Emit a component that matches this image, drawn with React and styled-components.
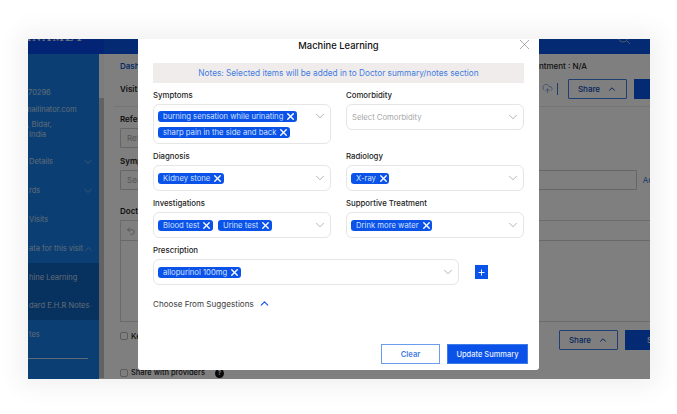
import React from "react";
import styled, { createGlobalStyle } from "styled-components";
import { ChevronDown, ChevronUp, X, Plus, Undo2, CloudUpload } from "lucide-react";

const Global = createGlobalStyle`
  html, body { margin: 0; background: #fff; }
  body { width: 677px; height: 414px; overflow: hidden; font-family: Inter, "Open Sans", sans-serif; }
  * { box-sizing: border-box; }
`;

const Frame = styled.div`
  position: relative;
  width: 622px;
  height: 340px;
  margin: 39px 0 0 28px;
  box-shadow: 0 0 24px 8px rgba(0, 0, 0, 0.06);
`;
const Page = styled.div`
  width: 100%;
  height: 100%;
  overflow: hidden;
  display: flex;
  flex-direction: column;
  background: #fff;
`;
const Header = styled.header`
  flex: none;
  height: 15px;
  display: flex;
  justify-content: space-between;
  background: #0654e4;
  overflow: hidden;
`;
const LogoCell = styled.div`
  width: 76px;
  background: #0648e8;
  overflow: hidden;
`;
const Logo = styled.div`
  width: 57px;
  margin-top: -9px;
  color: #fff;
  font: 700 12px/14px "Liberation Serif", serif;
  letter-spacing: 1.5px;
  white-space: nowrap;
  direction: rtl;
  opacity: 0.9;
`;
const Search = styled.div`
  width: 33px;
  margin-top: -10px;
  color: #9fb4dd;
`;
const Body = styled.div`
  flex: 1;
  min-height: 0;
  display: flex;
`;
const Sidebar = styled.aside`
  flex: none;
  width: 71px;
  overflow: hidden;
  display: flex;
  flex-direction: column;
  background: #167ee6;
  color: #c0d6ee;
  font-size: 7.5px;
  padding-top: 34px;
`;
const Contact = styled.div`
  white-space: nowrap;
  line-height: 10px;
  margin-bottom: ${(p) => p.$gap || 0}px;
  margin-left: ${(p) => p.$left || 0}px;
`;
const Nav = styled.div`
  flex: none;
  width: 71px;
  height: ${(p) => (p.$active ? 28.5 : 29)}px;
  display: flex;
  align-items: center;
  justify-content: space-between;
  padding: 0 5px 0 1px;
  white-space: nowrap;
  background: ${(p) => (p.$active ? "#0f62bc" : "transparent")};
  overflow: hidden;
`;
const SideRule = styled.div`
  flex: none;
  width: 60px;
  height: 1px;
  margin-top: 9px;
  background: #c0d4ea;
`;
const Track = styled.div`
  flex: none;
  width: 5px;
  padding-top: 44px;
  background: #f8f8f8;
`;
const Thumb = styled.div`
  height: 280px;
  background: #c4c4c4;
`;
const Main = styled.main`
  flex: 1;
  min-width: 0;
  padding: 6px 0 0 16px;
  overflow: hidden;
  font-size: 8px;
  color: #222;
`;
const Crumb = styled.div`
  color: #0f57c8;
  font-weight: 600;
  line-height: 12px;
  margin-bottom: 5px;
  display: flex;
  justify-content: space-between;
`;
const Appointment = styled.span`
  color: #222;
  font-weight: 500;
  margin-right: 63px;
`;
const VisitBar = styled.div`
  display: flex;
  align-items: center;
  justify-content: space-between;
  height: 23px;
  font-weight: 600;
`;
const Tools = styled.div`
  display: flex;
  align-items: center;
  color: #2f6fd0;
`;
const Divider = styled.span`
  width: 1px;
  height: 12px;
  margin: 0 10px 0 4px;
  background: #3a76d6;
`;
const Rule = styled.div`
  height: 1px;
  margin: 6px 0 6px -6px;
  background: #e8e8e8;
`;
const OutlineBtn = styled.div`
  width: 59px;
  height: 20px;
  display: flex;
  align-items: center;
  justify-content: center;
  gap: 7px;
  border: 1px solid #3f7fe8;
  border-radius: 1px;
  color: #0a4ab8;
  font-weight: 500;
`;
const FillBtn = styled.div`
  width: 60px;
  height: 20px;
  margin-left: 7px;
  background: #0654e4;
  color: #fff;
  display: flex;
  align-items: center;
  padding-left: 22px;
  margin-right: -44px;
`;
const FieldLabel = styled.div`
  font-weight: 600;
  line-height: 12px;
  margin-bottom: 3px;
`;
const InputRow = styled.div`
  display: flex;
  align-items: center;
  gap: 6px;
  width: ${(p) => (p.$short ? "300px" : "auto")};
  margin-right: ${(p) => (p.$short ? 0 : -8)}px;
  margin-bottom: ${(p) => p.$mb}px;
  color: #2f6fd0;
`;
const FakeInput = styled.div`
  flex: 1;
  height: 20px;
  border: 1px solid #ccc;
  border-radius: 1px;
  padding-left: 6px;
  display: flex;
  align-items: center;
  color: #aaa;
`;
const Editor = styled.div`
  height: 102px;
  margin-right: -2px;
  border: 1px solid #d6d6d6;
`;
const EditorBar = styled.div`
  height: 20px;
  display: flex;
  align-items: center;
  padding-left: 5px;
  border-bottom: 1px solid #d2d2d2;
  color: #777;
`;
const Check = styled.span`
  width: 8px;
  height: 8px;
  border: 1px solid #bbb;
  border-radius: 2px;
  flex: none;
`;
const KeepRow = styled.div`
  display: flex;
  align-items: flex-start;
  justify-content: space-between;
  margin-top: 8px;
  height: 20px;
  font-weight: 500;
`;
const CheckText = styled.div`
  display: flex;
  align-items: center;
  gap: 3px;
  font-weight: 500;
  line-height: 10px;
`;
const KeepActions = styled.div`
  display: flex;
  margin-right: 9px;
`;
const KeepText = styled(CheckText)`
  margin-top: 1px;
`;
const ShareRow = styled(CheckText)`
  margin-top: 18px;
  height: 10px;
  font-size: 7.5px;
`;
const Help = styled.span`
  width: 9px;
  height: 9px;
  margin-left: 7px;
  border-radius: 50%;
  background: #111;
  color: #fff;
  font-size: 6px;
  font-weight: 700;
  display: flex;
  align-items: center;
  justify-content: center;
`;
const Scrim = styled.div`
  position: absolute;
  inset: 0;
  background: rgba(0, 0, 0, 0.5);
`;
const Modal = styled.section`
  position: absolute;
  left: 110px;
  top: 0;
  width: 401px;
  height: 331px;
  padding: 0 15px;
  display: flex;
  flex-direction: column;
  background: #fff;
  border-radius: 0 0 3px 3px;
  color: #222;
`;
const CloseBtn = styled.div`
  position: absolute;
  top: -3px;
  right: 6px;
  color: #8a8a8a;
  display: flex;
`;
const Title = styled.h2`
  margin: 0;
  height: 24px;
  padding-top: 1px;
  text-align: center;
  font-size: 9.4px;
  line-height: 12px;
  font-weight: 500;
  color: #111;
`;
const Note = styled.div`
  height: 20px;
  display: flex;
  align-items: center;
  justify-content: center;
  background: #f1ecec;
  color: #3f7ce0;
  font-size: 8.25px;
`;
const FormGrid = styled.div`
  display: grid;
  grid-template-columns: 178px 178px;
  column-gap: 15px;
  margin-top: 6px;
`;
const Field = styled.div`
  display: flex;
  flex-direction: column;
  grid-column: ${(p) => (p.$wide ? "1 / 3" : "auto")};
  margin-bottom: 6px;
`;
const Label = styled.label`
  height: 12px;
  margin-bottom: 3px;
  font-size: 7.8px;
  line-height: 12px;
  font-weight: 500;
  color: #222;
`;
const SelectRow = styled.div`
  display: flex;
  align-items: center;
  gap: 16px;
`;
const Select = styled.div`
  width: ${(p) => p.$w || 178}px;
  height: ${(p) => (p.$tall ? 40 : 26)}px;
  padding: ${(p) => (p.$tall ? "6px 24px 0 4px" : "0 24px 0 4px")};
  position: relative;
  display: flex;
  flex-wrap: wrap;
  align-items: ${(p) => (p.$tall ? "flex-start" : "center")};
  align-content: ${(p) => (p.$tall ? "flex-start" : "center")};
  gap: 5px;
  border: 1px solid #e6e6e6;
  border-radius: 6px;
  background: #fff;
`;
const Caret = styled.span`
  position: absolute;
  right: 3px;
  top: ${(p) => p.$top}px;
  display: flex;
  color: #8a8a8a;
`;
const Placeholder = styled.span`
  font-size: 7.7px;
  padding-left: 1px;
  color: #a8a8a8;
`;
const Chip = styled.span`
  height: 11px;
  display: inline-flex;
  align-items: center;
  gap: 2px;
  padding: 0 0 0 5px;
  border-radius: 3px;
  background: #0a52e8;
  color: #cfe0ff;
  font-size: 7.7px;
  white-space: nowrap;
`;
const ChipX = styled(X)`
  color: #fff;
  margin-right: 0.5px;
`;
const AddBtn = styled.div`
  width: 13px;
  height: 14px;
  display: flex;
  align-items: center;
  justify-content: center;
  background: #0a52e8;
  color: #fff;
`;
const Suggestions = styled.div`
  display: flex;
  align-items: center;
  gap: 4px;
  margin-top: 6px;
  font-size: 8.1px;
  color: #3c3c3c;
  line-height: 12px;
  svg { color: #0a52e8; }
`;
const Footer = styled.div`
  margin-top: auto;
  margin-right: -4px;
  margin-bottom: 6px;
  display: flex;
  justify-content: flex-end;
  gap: 7px;
`;
const ClearBtn = styled.button`
  width: 59px;
  height: 20px;
  padding: 0;
  border: 1px solid #6a9cf0;
  background: #fff;
  color: #3f7ce0;
  font: 600 7.6px Inter, sans-serif;
`;
const UpdateBtn = styled.button`
  width: 81px;
  height: 20px;
  padding: 0;
  border: 1px solid #3f7ce8;
  background: #0a52e8;
  color: #e4edff;
  font: 500 7.5px Inter, sans-serif;
`;

const chip = (t) => (
  <Chip key={t}>
    {t}
    <ChipX size={11} strokeWidth={3} />
  </Chip>
);

const SelectField = ({ items = [], placeholder, tall, w }) => (
  <Select $tall={tall} $w={w}>
    {items.map(chip)}
    {placeholder && <Placeholder>{placeholder}</Placeholder>}
    <Caret $top={tall ? 4 : 5}>
      <ChevronDown size={14} strokeWidth={1.1} />
    </Caret>
  </Select>
);

export default function App() {
  return (
    <>
      <Global />
      <Frame>
        <Page>
          <Header>
            <LogoCell><Logo>SANAMEY</Logo></LogoCell>
            <Search>
              <svg width="14" height="14" viewBox="0 0 14 14" fill="none" stroke="currentColor">
                <circle cx="6" cy="6" r="5" />
                <path d="M10 10l3 3" />
              </svg>
            </Search>
          </Header>
          <Body>
            <Sidebar>
              <Contact $gap={7}>70296</Contact>
              <Contact $gap={5} $left={-3}>mailinator.com</Contact>
              <Contact $left={-3}>r, Bidar,</Contact>
              <Contact $gap={7} $left={1}>India</Contact>
              <Nav><span>Details</span><ChevronDown size={12} strokeWidth={1.1} /></Nav>
              <Nav><span>rds</span><ChevronDown size={12} strokeWidth={1.1} /></Nav>
              <Nav><span>Visits</span></Nav>
              <Nav><span>ata for this visit</span><ChevronUp size={12} strokeWidth={1.1} /></Nav>
              <Nav $active><span>hine Learning</span></Nav>
              <Nav $active><span>dard E.H.R Notes</span><ChevronDown size={12} strokeWidth={1.1} /></Nav>
              <Nav><span>tes</span></Nav>
              <SideRule />
            </Sidebar>
            <Track><Thumb /></Track>
            <Main>
              <Crumb>
                <span>Dashboard</span>
                <Appointment>Appointment : N/A</Appointment>
              </Crumb>
              <VisitBar>
                <span>Visit</span>
                <Tools>
                  <CloudUpload size={11} strokeWidth={1.2} />
                  <Divider />
                  <OutlineBtn>Share<ChevronUp size={10} strokeWidth={2.4} /></OutlineBtn>
                  <FillBtn />
                </Tools>
              </VisitBar>
              <Rule />
              <FieldLabel>Referred</FieldLabel>
              <InputRow $short $mb={7}><FakeInput>Refer</FakeInput></InputRow>
              <FieldLabel>Symptoms</FieldLabel>
              <InputRow $mb={15}><FakeInput>Search</FakeInput>Add</InputRow>
              <FieldLabel>Doctor</FieldLabel>
              <Editor>
                <EditorBar><Undo2 size={10} strokeWidth={1.3} /></EditorBar>
              </Editor>
              <KeepRow>
                <KeepText><Check />Keep</KeepText>
                <KeepActions>
                  <OutlineBtn>Share<ChevronUp size={10} strokeWidth={2.4} /></OutlineBtn>
                  <FillBtn>S</FillBtn>
                </KeepActions>
              </KeepRow>
              <ShareRow><Check />Share with providers<Help>?</Help></ShareRow>
            </Main>
          </Body>
        </Page>
        <Scrim />
        <Modal>
          <Title>Machine Learning</Title>
          <CloseBtn><X size={17} strokeWidth={1} /></CloseBtn>
          <Note>Notes: Selected items will be added in to Doctor summary/notes section</Note>
          <FormGrid>
            <Field>
              <Label>Symptoms</Label>
              <SelectField tall items={["burning sensation while urinating", "sharp pain in the side and back"]} />
            </Field>
            <Field>
              <Label>Comorbidity</Label>
              <SelectField placeholder="Select Comorbidity" />
            </Field>
            <Field>
              <Label>Diagnosis</Label>
              <SelectField items={["Kidney stone"]} />
            </Field>
            <Field>
              <Label>Radiology</Label>
              <SelectField items={["X-ray"]} />
            </Field>
            <Field>
              <Label>Investigations</Label>
              <SelectField items={["Blood test", "Urine test"]} />
            </Field>
            <Field>
              <Label>Supportive Treatment</Label>
              <SelectField items={["Drink more water"]} />
            </Field>
            <Field $wide>
              <Label>Prescription</Label>
              <SelectRow>
                <SelectField w={306} items={["allopurinol 100mg"]} />
                <AddBtn><Plus size={9} strokeWidth={2.5} /></AddBtn>
              </SelectRow>
            </Field>
          </FormGrid>
          <Suggestions>Choose From Suggestions <ChevronUp size={13} strokeWidth={2} /></Suggestions>
          <Footer>
            <ClearBtn>Clear</ClearBtn>
            <UpdateBtn>Update Summary</UpdateBtn>
          </Footer>
        </Modal>
      </Frame>
    </>
  );
}
